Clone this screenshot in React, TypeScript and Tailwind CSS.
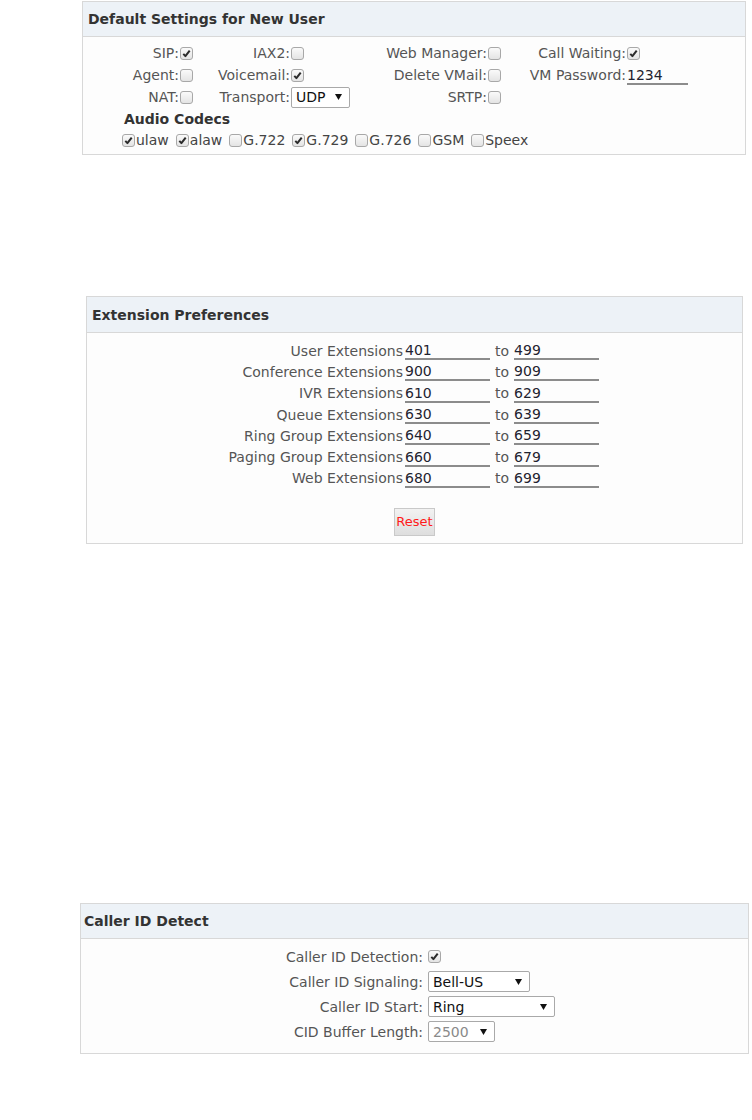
import React from "react";

const Box = ({ checked }: { checked?: boolean }) => (
  <span className="inline-flex h-[13px] w-[13px] shrink-0 items-center justify-center rounded-[3px] border border-[#a8a8a8] bg-linear-to-b from-[#fafafa] to-[#e4e4e4]">
    {checked && (
      <svg width="9" height="9" viewBox="0 0 9 9">
        <path d="M1.3 4.9 L3.4 7.1 L7.7 1.6" stroke="#2b2b2b" strokeWidth="2" fill="none" strokeLinejoin="round" />
      </svg>
    )}
  </span>
);

const Arrow = () => (
  <svg width="7" height="6" viewBox="0 0 7 6" className="shrink-0">
    <path d="M0 0 L7 0 L3.5 6 Z" fill="#111" />
  </svg>
);

const Sel = ({ value, className, muted }: { value: string; className: string; muted?: boolean }) => (
  <span
    className={
      "inline-flex h-[21px] items-center justify-between rounded-[2px] border border-[#a9a9a9] bg-white pl-[4px] pr-[7px] " +
      className
    }
  >
    <span className={muted ? "text-[#8a8a8a]" : "text-[#111]"}>{value}</span>
    <Arrow />
  </span>
);

const Panel = ({
  title,
  className,
  titleClass,
  children,
}: {
  title: string;
  className: string;
  titleClass: string;
  children: React.ReactNode;
}) => (
  <div className={"border border-[#d8d8d8] bg-[#fdfdfd] " + className}>
    <div className={"flex items-center border-b border-[#d8d8d8] bg-[#edf2f7] font-bold text-[#333] " + titleClass}>
      {title}
    </div>
    {children}
  </div>
);

const L = ({ children }: { children: React.ReactNode }) => (
  <div className="whitespace-nowrap text-right text-[#555]">{children}</div>
);

const C = ({ children }: { children: React.ReactNode }) => <div className="flex items-center pl-[1px]">{children}</div>;

const Codec = ({ label, checked }: { label: string; checked?: boolean }) => (
  <span className="flex items-center gap-[1px]">
    <Box checked={checked} />
    <span className="text-[#444]">{label}</span>
  </span>
);

const ExtRow = ({ label, a, b }: { label: string; a: string; b: string }) => (
  <div className="flex h-[21.3px] items-center">
    <div className="w-[316px] whitespace-nowrap text-right text-[#555]">{label}</div>
    <div className="ml-[2px] h-[19px] w-[85px] border-b-2 border-[#8c8c8c] leading-[19px] text-[#1f2330]">{a}</div>
    <div className="ml-[5px] text-[#555]">to</div>
    <div className="ml-[5px] h-[19px] w-[85px] border-b-2 border-[#8c8c8c] leading-[19px] text-[#1f2330]">{b}</div>
  </div>
);

const CidRow = ({ label, children }: { label: string; children: React.ReactNode }) => (
  <div className="flex h-[25px] items-center">
    <div className="w-[342px] whitespace-nowrap text-right text-[#555]">{label}</div>
    <div className="ml-[5px] flex items-center">{children}</div>
  </div>
);

export default function App() {
  return (
    <div
      className="flex min-h-[1120px] w-[752px] flex-col bg-white text-[14px] leading-[18px]"
      style={{ fontFamily: '"DejaVu Sans", Verdana, sans-serif' }}
    >
      <Panel title="Default Settings for New User" className="ml-[82px] mt-[1px] w-[664px]" titleClass="h-[35px] pl-[5px]">
        <div className="pb-[3px] pt-[5px]">
          <div className="grid auto-rows-[22px] grid-cols-[96px_21px_90px_65px_132px_18px_121px_80px] items-center">
            <L>SIP:</L>
            <C><Box checked /></C>
            <L>IAX2:</L>
            <C><Box /></C>
            <L>Web Manager:</L>
            <C><Box /></C>
            <L>Call Waiting:</L>
            <C><Box checked /></C>

            <L>Agent:</L>
            <C><Box /></C>
            <L>Voicemail:</L>
            <C><Box checked /></C>
            <L>Delete VMail:</L>
            <C><Box /></C>
            <L>VM Password:</L>
            <C>
              <div className="h-[19px] w-[61px] border-b-2 border-[#8c8c8c] leading-[19px] text-[#1f2330]">1234</div>
            </C>

            <L>NAT:</L>
            <C><Box /></C>
            <L>Transport:</L>
            <C><Sel value="UDP" className="w-[59px]" /></C>
            <L>SRTP:</L>
            <C><Box /></C>
            <div />
            <div />
          </div>
          <div className="flex h-[21px] items-center pl-[41px] font-bold text-[#333]">Audio Codecs</div>
          <div className="flex h-[22px] items-center gap-[7px] pl-[39px]">
            <Codec label="ulaw" checked />
            <Codec label="alaw" checked />
            <Codec label="G.722" />
            <Codec label="G.729" checked />
            <Codec label="G.726" />
            <Codec label="GSM" />
            <Codec label="Speex" />
          </div>
        </div>
      </Panel>

      <Panel title="Extension Preferences" className="ml-[86px] mt-[141px] w-[657px]" titleClass="h-[36px] pl-[5px]">
        <div className="pb-[7px] pt-[7px]">
          <ExtRow label="User Extensions" a="401" b="499" />
          <ExtRow label="Conference Extensions" a="900" b="909" />
          <ExtRow label="IVR Extensions" a="610" b="629" />
          <ExtRow label="Queue Extensions" a="630" b="639" />
          <ExtRow label="Ring Group Extensions" a="640" b="659" />
          <ExtRow label="Paging Group Extensions" a="660" b="679" />
          <ExtRow label="Web Extensions" a="680" b="699" />
          <div className="mt-[19px] flex">
            <div className="ml-[307px] flex h-[28px] w-[41px] items-center justify-center border border-[#c9c9c9] bg-linear-to-b from-[#f2f2f2] to-[#dedede] text-[13px] text-[#ff1a1a]">
              Reset
            </div>
          </div>
        </div>
      </Panel>

      <Panel title="Caller ID Detect" className="ml-[80px] mt-[359px] w-[669px]" titleClass="h-[35px] pl-[3px]">
        <div className="pb-[9px] pt-[5px]">
          <CidRow label="Caller ID Detection:">
            <Box checked />
          </CidRow>
          <CidRow label="Caller ID Signaling:">
            <Sel value="Bell-US" className="w-[102px]" />
          </CidRow>
          <CidRow label="Caller ID Start:">
            <Sel value="Ring" className="w-[127px]" />
          </CidRow>
          <CidRow label="CID Buffer Length:">
            <Sel value="2500" className="w-[67px]" muted />
          </CidRow>
        </div>
      </Panel>
    </div>
  );
}
